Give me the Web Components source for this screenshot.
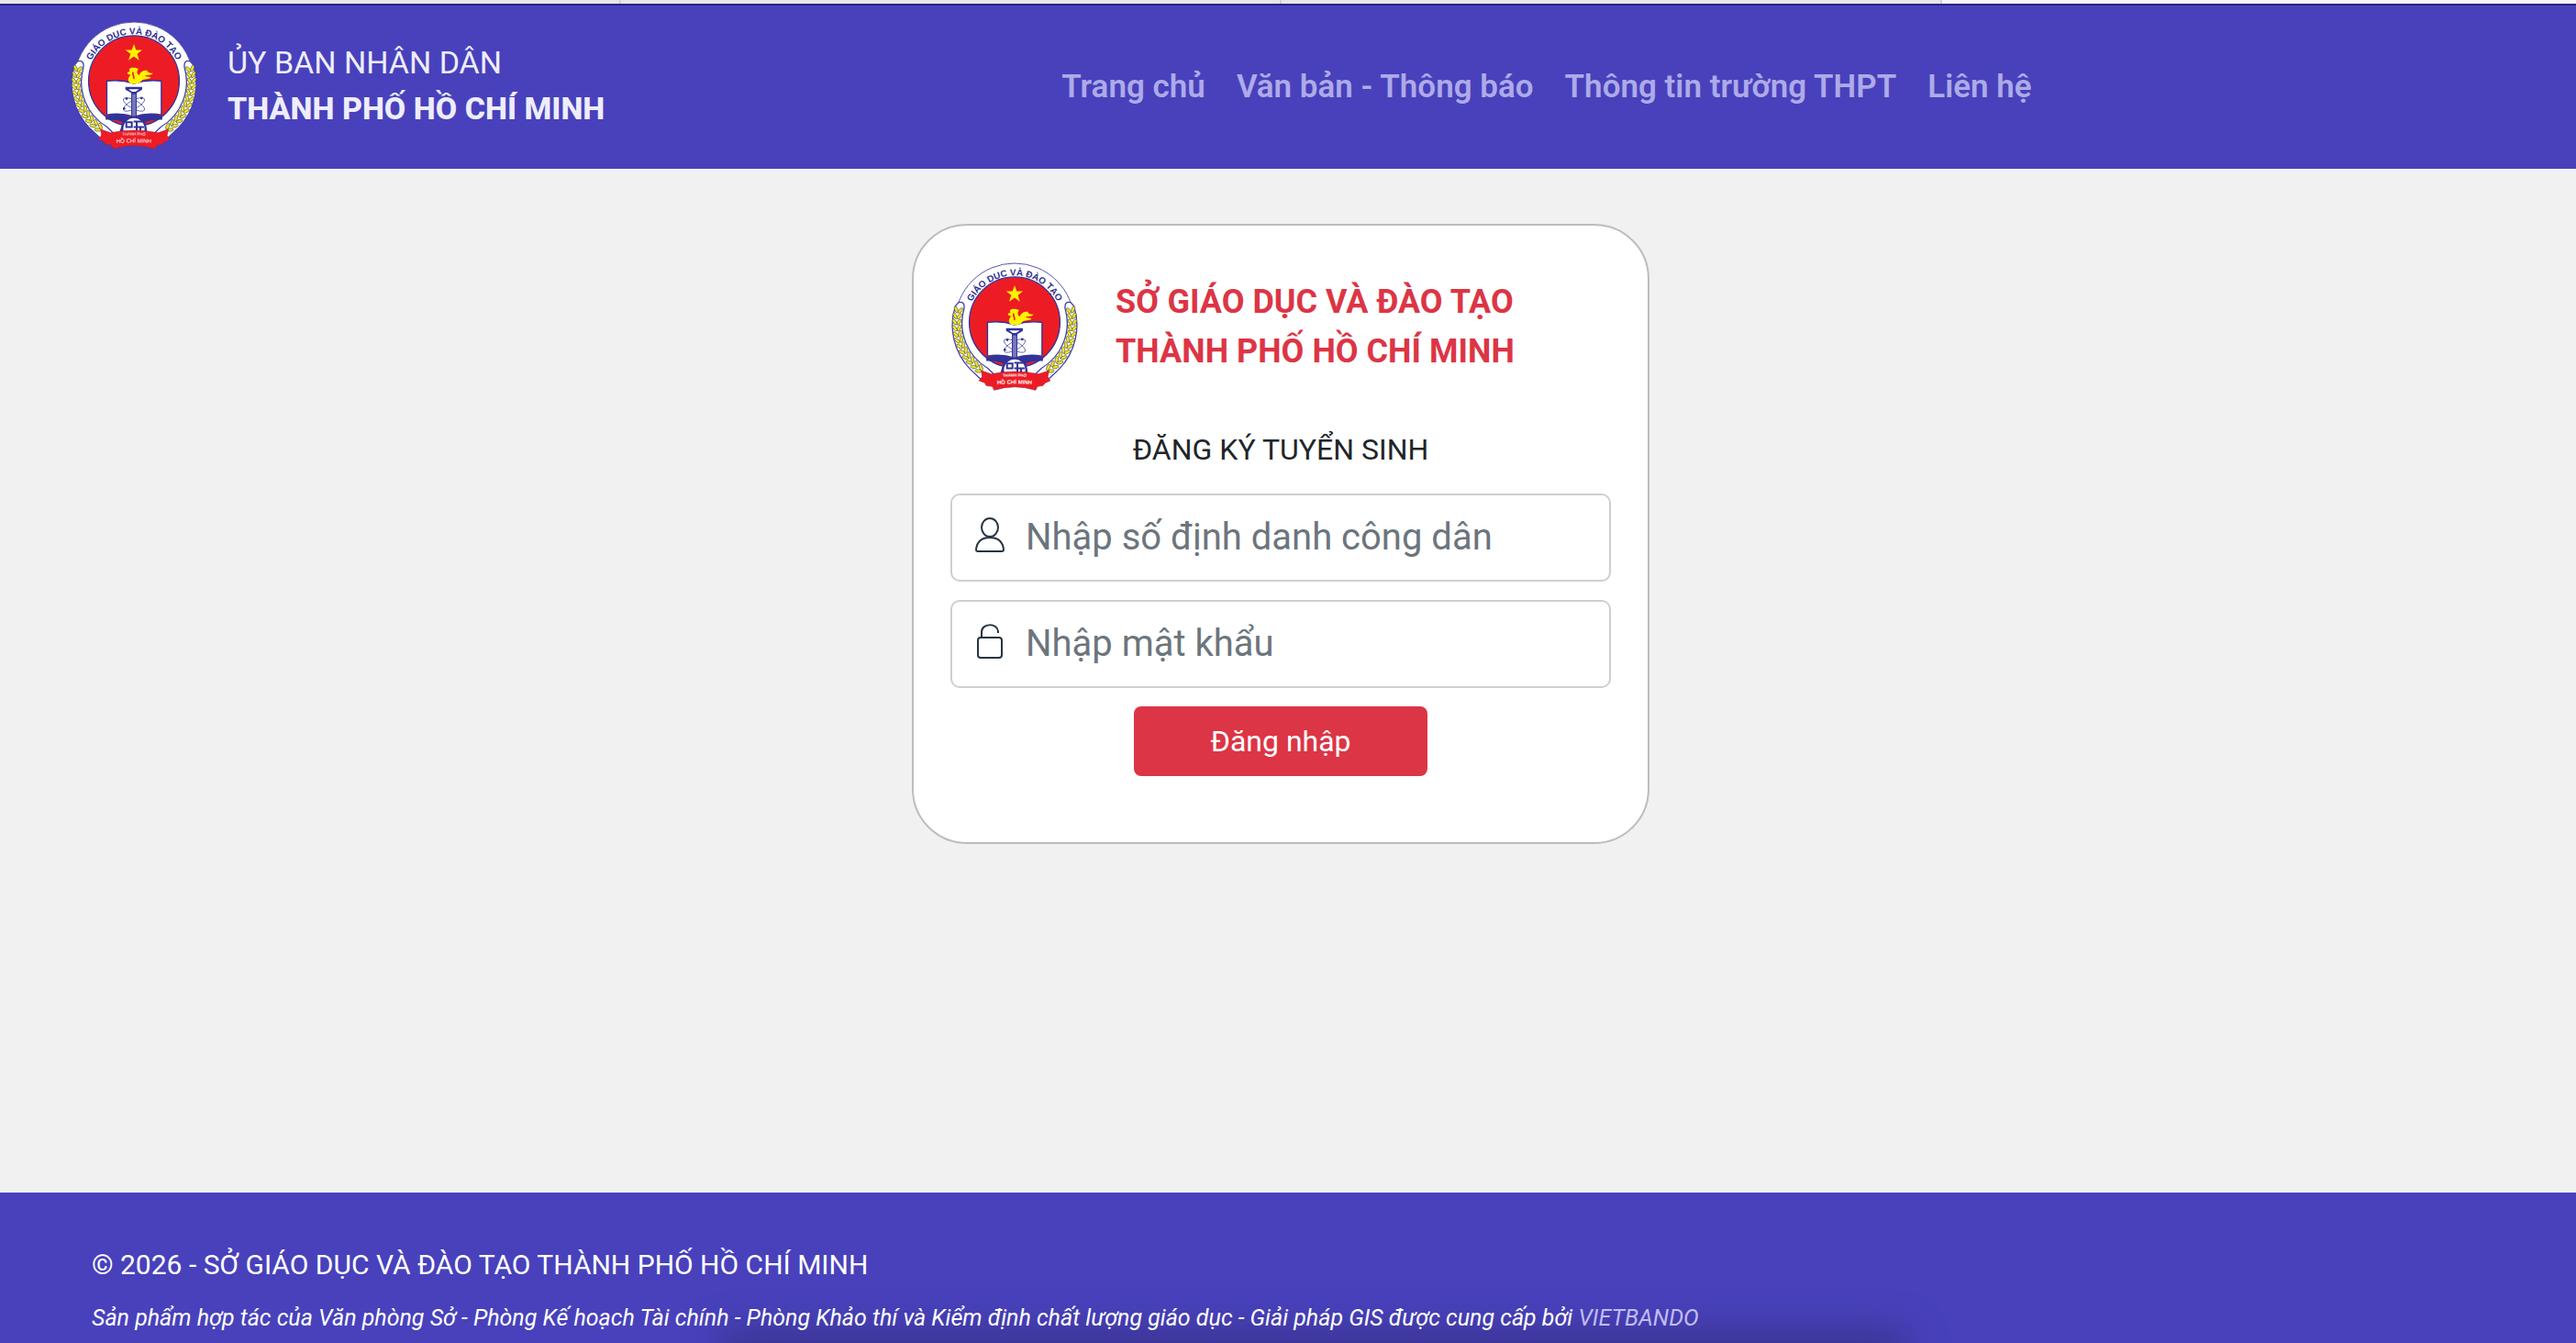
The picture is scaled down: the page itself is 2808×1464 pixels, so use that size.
<!DOCTYPE html>
<html lang="vi">
<head>
<meta charset="utf-8">
<title>Đăng ký tuyển sinh</title>
<style>
	html, body {
		margin: 0;
		min-height: 100vh;
	}

	body {
		font-family: Roboto, "Noto Sans", sans-serif;
		font-size: 32px;
		color: #212529;
		background: #f1f1f1;
		--brand: #4841bb;
		--danger: #dc3545;
		--gutter: 16px;
	}
</style>
</head>
<body>
<app-page>
	<tab-strip slot="header"></tab-strip>
	<site-header slot="header">
		<span slot="line1">ỦY BAN NHÂN DÂN</span>
		<span slot="line2">THÀNH PHỐ HỒ CHÍ MINH</span>
		<nav-link href="#home">Trang chủ</nav-link>
		<nav-link href="#docs">Văn bản - Thông báo</nav-link>
		<nav-link href="#schools">Thông tin trường THPT</nav-link>
		<nav-link href="#contact">Liên hệ</nav-link>
	</site-header>
	<login-card>
		<span slot="org1">SỞ GIÁO DỤC VÀ ĐÀO TẠO</span>
		<span slot="org2">THÀNH PHỐ HỒ CHÍ MINH</span>
		<span slot="title">ĐĂNG KÝ TUYỂN SINH</span>
		<icon-field icon="user" type="text" label="Nhập số định danh công dân"></icon-field>
		<icon-field icon="lock" type="password" label="Nhập mật khẩu"></icon-field>
		<submit-button slot="action">Đăng nhập</submit-button>
	</login-card>
	<site-footer slot="footer">
		<span slot="copyright">© 2026 - SỞ GIÁO DỤC VÀ ĐÀO TẠO THÀNH PHỐ HỒ CHÍ MINH</span>
		Sản phẩm hợp tác của Văn phòng Sở - Phòng Kế hoạch Tài chính - Phòng Khảo thí và Kiểm định chất lượng giáo dục - Giải pháp GIS được cung cấp bởi
		<span slot="vendor">VIETBANDO</span>
	</site-footer>
</app-page>

<script>
(function() {
	/**
	 * Small base class, attaches the shadow root and renders once
	*/
	class BaseElement extends HTMLElement {
		connectedCallback() {
			if (!this.shadowRoot) {
				this.attachShadow({mode: 'open'});
				this.shadowRoot.innerHTML = this.render();
			}
		}
	}

	class AppPage extends BaseElement {
		render() {
			return `<style>
				:host {
					display: flex;
					flex-direction: column;
					min-height: 100vh;
				}
				main {
					flex: 1;
					display: flex;
					justify-content: center;
					align-items: flex-start;
					padding: 60px var(--gutter) 60px 0;
				}
			</style>
			<slot name="header"></slot>
			<main><slot></slot></main>
			<slot name="footer"></slot>`;
		}
	}

	/**
	 * Thin strip with the lower edge of the tabs, last one is active
	*/
	class TabStrip extends BaseElement {
		render() {
			return `<style>
				:host {
					display: grid;
					grid-template-columns: 94fr 100fr 100fr 96fr;
					height: 4px;
					background: #e8e6e6;
				}
				i { border-right: 2px solid #d2d0d6; }
				i:last-child { border: 0; background: #f6f5f7; }
			</style>
			<i></i><i></i><i></i><i></i>`;
		}
	}

	/**
	 * Round emblem: text ring, wheat wreath, book with torch and ribbon
	*/
	class EduEmblem extends BaseElement {
		// one pair of grains per step, the left side is mirrored from the right one
		getWheat() {
			let grains = '';
			for (let a = -13; a <= 54; a += 6) {
				grains += `<g transform="rotate(${a} 257 238) translate(447 238)">
					<ellipse cx="-7" cy="0" rx="5" ry="11" transform="rotate(-32 -8 0)"/>
					<ellipse cx="7" cy="0" rx="5" ry="11" transform="rotate(32 8 0)"/>
				</g>`;
			}
			return grains;
		}

		render() {
			const wheat = this.getWheat();
			return `<style>
				:host { display: block; flex: none; width: 140px; height: 140px; }
				svg { display: block; width: 100%; height: 100%; }
				text { font-family: "Liberation Sans", sans-serif; }
			</style>
			<svg viewBox="46 38 422 422" role="img" aria-label="Giáo dục và Đào tạo">
				<defs>
					<path id="ring" d="M105 199A157 157 0 0 1 409 199"/>
					<path id="rib1" d="M200 416Q257 410 314 416"/>
					<path id="rib2" d="M180 441Q257 433 334 441"/>
					<g id="half">
						<path d="M423 190Q420 164 442 170L452 182A208 208 0 0 1 404 388L360 430L310 420L345 386A172 172 0 0 0 423 190Z" fill="#fff" stroke="#403eae" stroke-width="4"/>
						<g fill="#efe629" stroke="#5b5a48" stroke-width="2">${wheat}</g>
					</g>
				</defs>
				<circle cx="257" cy="237" r="196" fill="#fff" stroke="#5654ae" stroke-width="3"/>
				<use href="#half"/>
				<use href="#half" transform="translate(514 0) scale(-1 1)"/>
				<circle cx="257" cy="235" r="149" fill="#ed1c24" stroke="#30339b" stroke-width="4"/>
				<text font-size="30" font-weight="700" fill="#2d3091" text-anchor="middle"><textPath href="#ring" startOffset="50%">GIÁO DỤC VÀ ĐÀO TẠO</textPath></text>
				<path d="M257 113L264 133L284 133L268 146L274 167L257 154L239 167L246 146L229 133L250 133Z" fill="#fff200"/>
				<path d="M168 235Q214 229 257 243Q300 229 347 235V346Q300 338 257 352Q214 338 168 346Z" fill="#fff" stroke="#30339b" stroke-width="4"/>
				<path d="M246 243C232 231 240 222 246 214C231 214 233 204 244 204C235 192 252 186 272 195C264 206 268 212 274 216C278 206 284 200 300 200C302 204 304 209 320 209C312 217 304 215 292 217C301 223 313 218 312 224C299 231 284 227 280 237C266 247 258 245 246 243Z" fill="#fff200"/>
				<path d="M254 206C250 214 260 218 256 228" fill="none" stroke="#ed1c24" stroke-width="5"/>
				<g fill="none" stroke="#30339b" stroke-width="2">
					<ellipse cx="257" cy="312" rx="14" ry="39" transform="rotate(62 257 312)"/>
					<ellipse cx="257" cy="312" rx="14" ry="39" transform="rotate(-62 257 312)"/>
				</g>
				<g fill="#30339b"><circle cx="233" cy="293" r="4"/><circle cx="225" cy="325" r="4"/><circle cx="282" cy="291" r="4"/></g>
				<path d="M229 254H284V263L266 274V352H248V274L229 263Z" fill="#30339b"/>
				<path d="M239 262H274L262 270H251Z" fill="#fff"/>
				<path d="M254 278V350M260 278V350" stroke="#fff" stroke-width="2"/>
				<path d="M164 350Q218 336 257 358Q298 336 350 350V362Q316 360 294 370L302 408H208L220 370Q198 360 164 362Z" fill="#30339b"/>
				<circle cx="257" cy="392" r="38" fill="#fff" stroke="#30339b" stroke-width="6"/>
				<path d="M232 370H250V386H232ZM256 368H284M256 386H290M266 368V410M278 386V410" stroke="#30339b" stroke-width="6" fill="none"/>
				<path d="M148 394L180 405Q257 389 336 405L370 394L366 414L374 427L358 434L350 443L332 446L326 458Q257 436 190 458L184 446L164 443L158 433L140 427L150 414Z" fill="#ed1c24" stroke="#a82149" stroke-width="2"/>
				<g fill="#fff" text-anchor="middle">
					<text font-size="13"><textPath href="#rib1" startOffset="50%">THÀNH PHỐ</textPath></text>
					<text font-size="18"><textPath href="#rib2" startOffset="50%">HỒ CHÍ MINH</textPath></text>
				</g>
			</svg>`;
		}
	}

	class SiteHeader extends BaseElement {
		render() {
			return `<style>
				:host {
					display: grid;
					grid-template-columns: 41fr 59fr;
					align-items: center;
					box-sizing: border-box;
					min-height: 180px;
					background: var(--brand);
					border-top: 2px solid #2b2485;
				}
				.brand {
					display: flex;
					align-items: center;
					gap: 32px;
					padding: 0 0 4px 76px;
					color: #eeedfb;
					font-size: 34px;
					line-height: 50px;
				}
				.brand p { margin: 0; }
				.strong { font-weight: 800; }
				nav {
					display: flex;
					gap: 34px;
					padding-left: 6px;
				}
			</style>
			<div class="brand">
				<edu-emblem></edu-emblem>
				<div>
					<p><slot name="line1"></slot></p>
					<p class="strong"><slot name="line2"></slot></p>
				</div>
			</div>
			<nav><slot></slot></nav>`;
		}
	}

	class NavLink extends BaseElement {
		render() {
			return `<style>
				:host { display: block; }
				a {
					color: #aeaae9;
					font: 600 35px/48px Roboto, sans-serif;
					text-decoration: none;
					white-space: nowrap;
				}
			</style>
			<a href="${this.getAttribute('href')}"><slot></slot></a>`;
		}
	}

	class LoginCard extends BaseElement {
		render() {
			return `<style>
				:host {
					display: block;
					box-sizing: border-box;
					width: 100%;
					max-width: 804px;
					padding: 40px 40px 72px;
					background: #fff;
					border: 2px solid #bfbcbd;
					border-radius: 60px;
				}
				.org {
					display: flex;
					align-items: center;
					gap: 40px;
					color: var(--danger);
					font-size: 36px;
					font-weight: 700;
					line-height: 54px;
				}
				.org p { margin: 0; }
				h1 {
					margin: 40px 0 24px;
					font-size: 32px;
					font-weight: 400;
					line-height: 48px;
					text-align: center;
				}
				form {
					display: grid;
					gap: 20px;
				}
			</style>
			<div class="org">
				<edu-emblem></edu-emblem>
				<div>
					<p><slot name="org1"></slot></p>
					<p><slot name="org2"></slot></p>
				</div>
			</div>
			<h1><slot name="title"></slot></h1>
			<form>
				<slot></slot>
				<slot name="action"></slot>
			</form>`;
		}
	}

	const ICONS = {
		user: '<ellipse cx="17" cy="11" rx="9" ry="10"/><path d="M4 37Q2 37 2 35C3 26 9 22 17 22S31 26 32 35Q32 37 30 37Z"/>',
		lock: '<rect x="4" y="15" width="26" height="22" rx="3"/><path d="M8 15V9C8 -1 25 -1 26 8V10"/>'
	};

	class IconField extends BaseElement {
		render() {
			const label = this.getAttribute('label');
			return `<style>
				:host { display: block; }
				.field {
					display: flex;
					align-items: center;
					gap: 22px;
					box-sizing: border-box;
					height: 96px;
					padding: 0 24px;
					border: 2px solid #cfcfd1;
					border-radius: 10px;
				}
				label { display: flex; }
				svg {
					width: 34px;
					height: 44px;
					fill: none;
					stroke: #263442;
					stroke-width: 2;
				}
				input {
					flex: 1;
					min-width: 0;
					padding: 0;
					border: 0;
					outline: 0;
					background: none;
					color: #212529;
					font: 400 40px/60px Roboto, sans-serif;
				}
				input::placeholder { color: #6c757d; opacity: 1; }
			</style>
			<div class="field">
				<label for="input" aria-label="${label}"><svg viewBox="0 0 34 44">${ICONS[this.getAttribute('icon')]}</svg></label>
				<input id="input" type="${this.getAttribute('type')}" placeholder="${label}">
			</div>`;
		}
	}

	class SubmitButton extends BaseElement {
		render() {
			return `<style>
				:host { display: flex; justify-content: center; }
				button {
					min-width: 320px;
					padding: 14px 24px;
					border: 0;
					border-radius: 8px;
					background: var(--danger);
					color: #fff;
					font: 400 32px/48px Roboto, sans-serif;
				}
			</style>
			<button type="button"><slot></slot></button>`;
		}
	}

	class SiteFooter extends BaseElement {
		render() {
			return `<style>
				:host {
					display: block;
					position: relative;
					overflow: hidden;
					padding: 54px 100px 4px;
					background: var(--brand);
					color: #fff;
				}
				p { margin: 0; position: relative; }
				.copy { font-size: 30px; line-height: 50px; }
				.credit { margin-top: 10px; font-size: 25px; font-style: italic; line-height: 46px; }
				a { color: #c0bcf3; text-decoration: none; }
				.shade {
					position: absolute;
					left: 28%;
					right: 26%;
					bottom: -20px;
					height: 30px;
					background: #352f83;
					filter: blur(20px);
				}
			</style>
			<div class="shade"></div>
			<p class="copy"><slot name="copyright"></slot></p>
			<p class="credit"><slot></slot> <a href="#vendor"><slot name="vendor"></slot></a></p>`;
		}
	}

	/**
	 * Register all the elements used by the page
	*/
	function defineElements() {
		customElements.define('app-page', AppPage);
		customElements.define('tab-strip', TabStrip);
		customElements.define('edu-emblem', EduEmblem);
		customElements.define('site-header', SiteHeader);
		customElements.define('nav-link', NavLink);
		customElements.define('login-card', LoginCard);
		customElements.define('icon-field', IconField);
		customElements.define('submit-button', SubmitButton);
		customElements.define('site-footer', SiteFooter);
	}

	defineElements();
})();
</script>
</body>
</html>
